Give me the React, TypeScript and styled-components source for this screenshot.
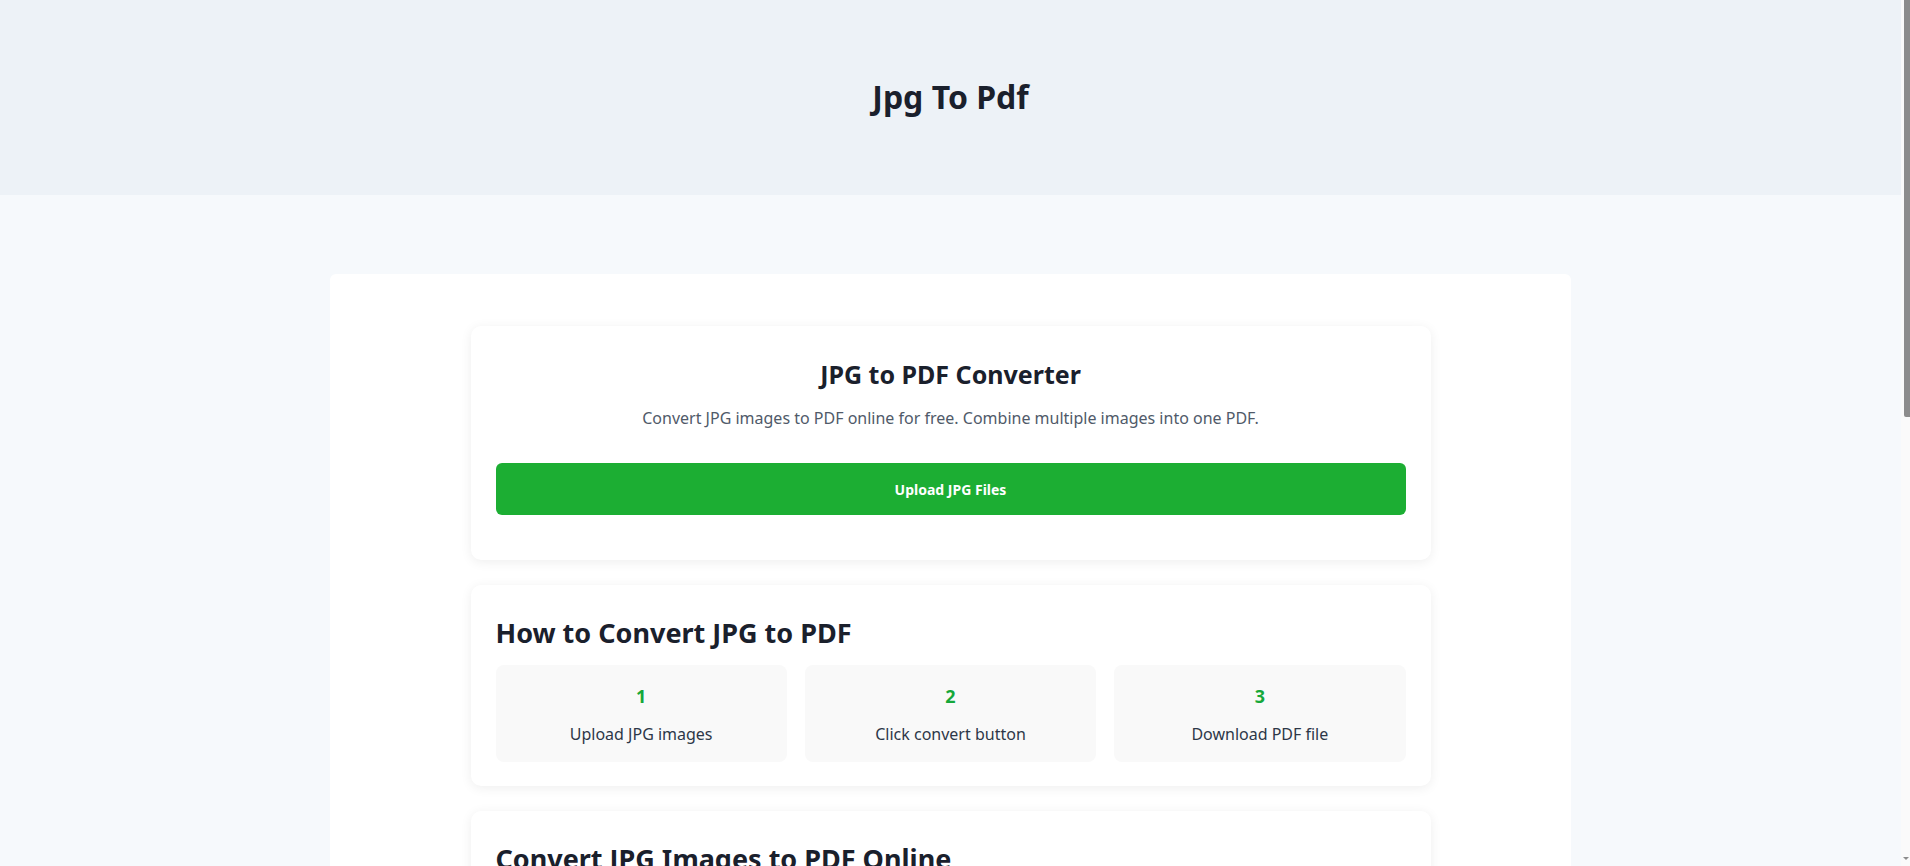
import React from "react";
import styled, { createGlobalStyle } from "styled-components";

const GlobalStyle = createGlobalStyle`
  html, body { margin: 0; padding: 0; }
  body {
    background: #f6f9fc;
    font-family: "Segoe UI", "Noto Sans", "Open Sans", sans-serif;
    color: #1a202c;
    padding-right: 9px;
  }
  * { box-sizing: border-box; }
`;

const ScrollTrack = styled.div`
  position: fixed;
  top: 0;
  right: 0;
  width: 9px;
  height: 100vh;
  background: #fafafa;
  z-index: 10;
`;

const ScrollThumb = styled.div`
  position: absolute;
  top: 0;
  left: 3px;
  width: 6px;
  height: 417px;
  background: #8c8c8c;
  border-bottom-left-radius: 2px;
`;

const ScrollArrow = styled.div`
  position: absolute;
  bottom: 6px;
  left: 2px;
  width: 0;
  height: 0;
  border-left: 3px solid transparent;
  border-right: 3px solid transparent;
  border-top: 3px solid #8c8c8c;
`;

const Header = styled.header`
  height: 195px;
  background: #edf2f7;
  display: flex;
  align-items: center;
  justify-content: center;
`;

const SiteTitle = styled.h1`
  margin: 0 0 2px;
  font-size: 32px;
  font-weight: 700;
  color: #1a202c;
`;

const Main = styled.main`
  padding: 79px 0 60px;
`;

const Container = styled.div`
  width: 1241px;
  margin: 0 auto;
  background: #ffffff;
  border-radius: 6px;
  padding: 52px 0 40px;
  display: flex;
  flex-direction: column;
  align-items: center;
  gap: 25px;
`;

const Card = styled.section<{ $center?: boolean }>`
  width: 960px;
  background: #ffffff;
  border-radius: 10px;
  box-shadow: 0 2px 12px rgba(0, 0, 0, 0.07);
  padding: 24px 25px;
  text-align: ${(p) => (p.$center ? "center" : "left")};
`;

const CardTitle = styled.h2`
  margin: 9px 0 17px;
  font-size: 25px;
  font-weight: 700;
  line-height: 1.2;
  color: #1a202c;
`;

const Lead = styled.p`
  margin: 0 0 33px;
  font-size: 16px;
  line-height: 24px;
  color: #505a69;
`;

const UploadButton = styled.button`
  display: block;
  width: 100%;
  height: 52px;
  border: none;
  border-radius: 6px;
  background: #1cae33;
  color: #ffffff;
  font-family: inherit;
  font-size: 14px;
  font-weight: 700;
  cursor: pointer;
  margin-bottom: 21px;
`;

const SectionTitle = styled.h2`
  margin: 7px 0 15px;
  font-size: 27px;
  font-weight: 700;
  line-height: 1.25;
  color: #1a202c;
`;

const Steps = styled.div`
  display: grid;
  grid-template-columns: repeat(3, 1fr);
  gap: 18px;
`;

const Step = styled.div`
  background: #f9f9f9;
  border-radius: 8px;
  padding: 18px 16px 16px;
  text-align: center;
`;

const StepNum = styled.div`
  font-size: 18px;
  font-weight: 700;
  line-height: 27px;
  color: #16a83a;
  margin-bottom: 12px;
`;

const StepText = styled.div`
  font-size: 16px;
  line-height: 24px;
  color: #2d3748;
`;

const Para = styled.p`
  margin: 0 0 16px;
  font-size: 16px;
  line-height: 1.7;
  color: #4a5568;
`;

const List = styled.ul`
  margin: 0 0 16px;
  padding-left: 22px;
  font-size: 16px;
  line-height: 1.8;
  color: #4a5568;
`;

const FaqItem = styled.div`
  padding: 14px 0;
  border-bottom: 1px solid #edf2f7;
  &:last-child { border-bottom: none; }
`;

const FaqQ = styled.h3`
  margin: 0 0 6px;
  font-size: 18px;
  font-weight: 600;
  color: #1a202c;
`;

const FaqA = styled.p`
  margin: 0;
  font-size: 16px;
  line-height: 1.6;
  color: #4a5568;
`;

const Footer = styled.footer`
  padding: 30px 0;
  text-align: center;
  font-size: 14px;
  color: #718096;
  background: #edf2f7;
`;

const steps = [
  { n: 1, t: "Upload JPG images" },
  { n: 2, t: "Click convert button" },
  { n: 3, t: "Download PDF file" },
];

export default function App() {
  return (
    <>
      <GlobalStyle />
      <ScrollTrack aria-hidden>
        <ScrollThumb />
        <ScrollArrow />
      </ScrollTrack>
      <Header>
        <SiteTitle>Jpg To Pdf</SiteTitle>
      </Header>
      <Main>
        <Container>
          <Card $center>
            <CardTitle>JPG to PDF Converter</CardTitle>
            <Lead>Convert JPG images to PDF online for free. Combine multiple images into one PDF.</Lead>
            <UploadButton>Upload JPG Files</UploadButton>
          </Card>
          <Card>
            <SectionTitle>How to Convert JPG to PDF</SectionTitle>
            <Steps>
              {steps.map((s) => (
                <Step key={s.n}>
                  <StepNum>{s.n}</StepNum>
                  <StepText>{s.t}</StepText>
                </Step>
              ))}
            </Steps>
          </Card>
          <Card>
            <SectionTitle>Convert JPG Images to PDF Online</SectionTitle>
            <Para>
              Our free JPG to PDF converter lets you turn one or more JPG images into a single PDF document in
              seconds. There is no need to install any software or create an account.
            </Para>
            <List>
              <li>Combine multiple images into one PDF</li>
              <li>Keeps the original image quality</li>
              <li>Works on any device and browser</li>
              <li>Files are processed securely in your browser</li>
            </List>
          </Card>
          <Card>
            <SectionTitle>Frequently Asked Questions</SectionTitle>
            <FaqItem>
              <FaqQ>Is this JPG to PDF converter free?</FaqQ>
              <FaqA>Yes, the converter is completely free to use with no limits.</FaqA>
            </FaqItem>
            <FaqItem>
              <FaqQ>Can I convert multiple JPG files at once?</FaqQ>
              <FaqA>Yes, you can upload several images and combine them into one PDF file.</FaqA>
            </FaqItem>
            <FaqItem>
              <FaqQ>Are my files safe?</FaqQ>
              <FaqA>Your images are never stored on our servers and are removed after conversion.</FaqA>
            </FaqItem>
          </Card>
        </Container>
      </Main>
      <Footer>© 2024 Jpg To Pdf. All rights reserved.</Footer>
    </>
  );
}
